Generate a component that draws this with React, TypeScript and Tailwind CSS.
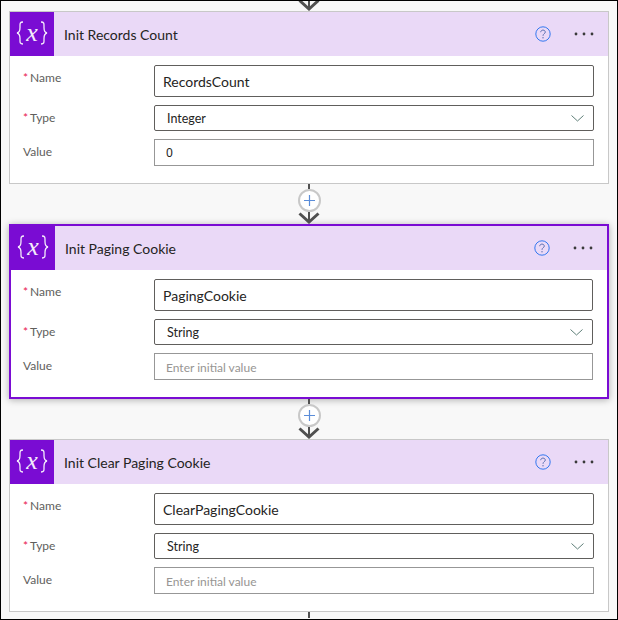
import React from "react";

function Arrow() {
  return (
    <svg width="22" height="12" viewBox="0 0 22 12" className="block">
      <path d="M1.5 1.5 L11 10 L20.5 1.5" fill="none" stroke="#505050" strokeWidth="3" />
      <path d="M11 0 V10" stroke="#505050" strokeWidth="2" />
    </svg>
  );
}

function Connector() {
  return (
    <div className="flex h-[40px] flex-col items-center">
      <div className="h-[5px] w-[2px] bg-[#505050]" />
      <div className="flex h-[23px] w-[23px] items-center justify-center rounded-full border-2 border-[#c8c8c8] bg-white">
        <svg width="13" height="13" viewBox="0 0 13 13">
          <path d="M6.5 1 V12 M1 6.5 H12" stroke="#5b8dd9" strokeWidth="1.2" />
        </svg>
      </div>
      <Arrow />
    </div>
  );
}

function HelpIcon() {
  return (
    <svg width="16" height="16" viewBox="0 0 16 16" className="block">
      <circle cx="8" cy="8" r="7.2" fill="none" stroke="#3478f0" strokeWidth="1" />
      <path
        d="M5.7 6.2 C5.8 4.8 6.8 4.1 8 4.1 C9.4 4.1 10.3 5 10.3 6.1 C10.3 7.7 8 7.7 8 9.8"
        fill="none"
        stroke="#5a6fb0"
        strokeWidth="1"
      />
      <circle cx="8" cy="11.7" r="0.7" fill="#5a6fb0" />
    </svg>
  );
}

function Dots() {
  return (
    <svg width="20" height="4" viewBox="0 0 20 4" className="block">
      <circle cx="2" cy="2" r="1.4" fill="#3a3a3a" />
      <circle cx="10" cy="2" r="1.4" fill="#3a3a3a" />
      <circle cx="18" cy="2" r="1.4" fill="#3a3a3a" />
    </svg>
  );
}

function Brace({ flip }: { flip?: boolean }) {
  return (
    <svg width="8" height="24" viewBox="0 0 8 24" className={flip ? "block -scale-x-100" : "block"}>
      <path
        d="M7 1 C3.5 1 4 3 4 6.5 C4 10 3.5 11.5 1 12 C3.5 12.5 4 14 4 17.5 C4 21 3.5 23 7 23"
        fill="none"
        stroke="#f4ecfb"
        strokeWidth="1.3"
      />
    </svg>
  );
}

function Label({ text, required }: { text: string; required?: boolean }) {
  return (
    <div className="w-[131px] shrink-0 pt-[5px] text-[12px] leading-4 text-[#605e5c]">
      {required ? <span className="mr-[2px] text-[#e8174f]">*</span> : null}
      {text}
    </div>
  );
}

function Card({
  title,
  name,
  type,
  value,
  selected,
}: {
  title: string;
  name: string;
  type: string;
  value?: string;
  selected?: boolean;
}) {
  return (
    <div
      className={
        selected
          ? "border-2 border-[#7a0cd3] bg-white shadow-[0_1px_7px_rgba(0,0,0,0.3)]"
          : "border border-[#c8c8c8] bg-white"
      }
    >
      <div className="flex h-[44px] items-center bg-[#ead9f7]">
        <div className="flex h-[44px] w-[44px] items-center justify-center gap-[2px] bg-[#7a0cd3] pb-[2px] text-white">
          <Brace />
          <span className="font-['Liberation_Serif',serif] text-[26px] italic leading-none text-[#f4ecfb]">x</span>
          <Brace flip />
        </div>
        <div className="ml-[10px] flex-1 text-[14px] text-[#252423]">{title}</div>
        <div className="mb-[1px] mr-[23px]">
          <HelpIcon />
        </div>
        <div className="mr-[14px]">
          <Dots />
        </div>
      </div>
      <div className={selected ? "pb-[17px] pl-[12px] pr-[14px] pt-[9px]" : "pb-[17px] pl-[13px] pr-[14px] pt-[9px]"}>
        <div className="flex flex-col gap-[8px]">
          <div className="flex">
            <Label text="Name" required />
            <div className="flex h-[32px] flex-1 items-center rounded-[2px] border border-[#605e5c] bg-white pl-[8px] text-[14px] text-[#252423]">
              {name}
            </div>
          </div>
          <div className="flex">
            <Label text="Type" required />
            <div className="flex h-[26px] flex-1 items-center justify-between rounded-[2px] border border-[#605e5c] bg-white pl-[12px] pr-[9px] text-[12.5px] text-[#252423]">
              <span className="pt-[3px]">{type}</span>
              <svg width="13" height="7" viewBox="0 0 13 7" className="block">
                <path d="M0.5 0.5 L6.5 6 L12.5 0.5" fill="none" stroke="#5f7f78" strokeWidth="1" />
              </svg>
            </div>
          </div>
          <div className="flex">
            <Label text="Value" />
            <div className="flex h-[27px] flex-1 items-center border border-[#979797] bg-white pl-[11px] text-[12px]">
              {value !== undefined ? (
                <span className="font-['Noto_Sans',sans-serif] text-[#252423]">{value}</span>
              ) : (
                <span className="pt-[3px] text-[#979593]">Enter initial value</span>
              )}
            </div>
          </div>
        </div>
      </div>
    </div>
  );
}

export default function App() {
  return (
    <div className="h-[620px] w-[618px] overflow-hidden border border-black bg-[#f8f8f8] px-[8px] font-['Lato',sans-serif]">
      <div className="flex h-[10px] items-end justify-center overflow-hidden">
        <Arrow />
      </div>
      <Card title="Init Records Count" name="RecordsCount" type="Integer" value="0" />
      <Connector />
      <Card title="Init Paging Cookie" name="PagingCookie" type="String" selected />
      <Connector />
      <Card title="Init Clear Paging Cookie" name="ClearPagingCookie" type="String" />
      <div className="mx-auto h-[6px] w-[2px] bg-[#505050]" />
    </div>
  );
}
